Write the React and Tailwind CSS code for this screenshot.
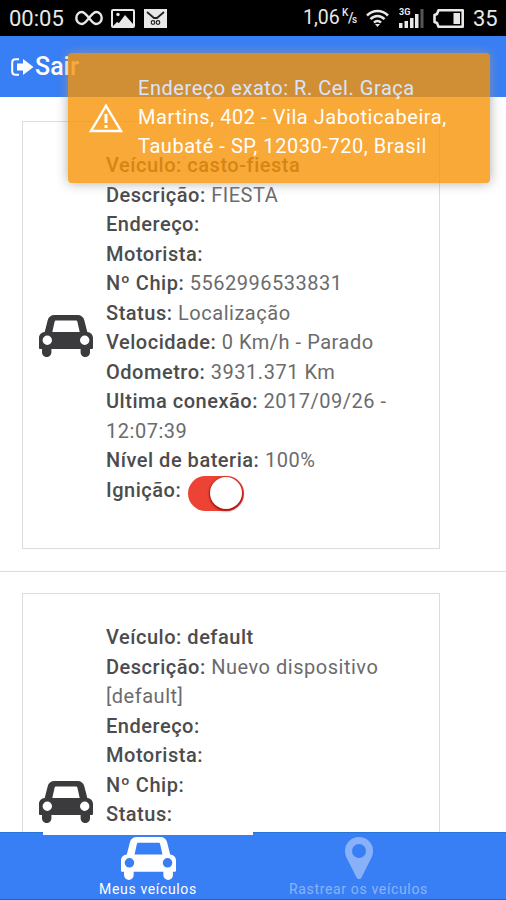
import React from "react";

const primaryCar = [
  { label: "Veículo:", value: "casto-fiesta", bold: true },
  { label: "Descrição:", value: "FIESTA" },
  { label: "Endereço:" },
  { label: "Motorista:" },
  { label: "Nº Chip:", value: "5562996533831" },
  { label: "Status:", value: "Localização" },
  { label: "Velocidade:", value: "0 Km/h - Parado" },
  { label: "Odometro:", value: "3931.371 Km" },
  { label: "Ultima conexão:", value: "2017/09/26 - 12:07:39" },
  { label: "Nível de bateria:", value: "100%" },
  { label: "Ignição:", toggle: true },
];

const secondCar = [
  { label: "Veículo:", value: "default", bold: true },
  { label: "Descrição:", value: "Nuevo dispositivo [default]" },
  { label: "Endereço:" },
  { label: "Motorista:" },
  { label: "Nº Chip:" },
  { label: "Status:" },
];

const CarIcon = ({ className }) => (
  <svg viewBox="0 0 54 42" className={className} fill="currentColor">
    <path
      fillRule="evenodd"
      d="M15.500 0h23c3.600 0 6 2 6.800 5.200L48.300 17c3.300.3 5.700 2.600 5.700 6v9.800c0 .8-.5 1.200-1.200 1.200H51v3.400a4.700 4.700 0 0 1-9.400 0V34H12.400v3.400a4.700 4.700 0 0 1-9.400 0V34H1.200C.5 34 0 33.600 0 32.800V23c0-3.400 2.400-5.700 5.700-6l3-11.800C9.500 2 11.900 0 15.500 0Zm1.700 5.600c-.9 0-1.400.4-1.600 1.200L13.300 17h27.400L38.400 6.800c-.2-.8-.7-1.200-1.600-1.200ZM8.300 20.500a4.700 4.700 0 1 0 0 9.400 4.700 4.700 0 0 0 0-9.400Zm37.400 0a4.700 4.700 0 1 0 0 9.400 4.700 4.700 0 0 0 0-9.400Z"
    />
  </svg>
);

const StatusBar = () => (
  <div className="flex h-9 shrink-0 items-center bg-black text-[#e8e8e8]">
    <span className="ml-[9px] mt-[2px] w-[56px] text-[22px] leading-9">00:05</span>
    <svg viewBox="0 0 28 16" className="ml-[10px] h-4 w-7" fill="none" stroke="currentColor" strokeWidth="2.4">
      <path d="M14 8C11 4.500 9.500 2 6.800 2a5.500 6 0 0 0 0 12C9.500 14 11 11.500 14 8s4.500-6 7.200-6a5.500 6 0 0 1 0 12C18.500 14 17 11.500 14 8Z" />
    </svg>
    <svg viewBox="0 0 24 19" className="ml-[8px] h-[19px] w-6" fill="none">
      <rect x="1" y="1" width="22" height="17" rx="1" stroke="currentColor" strokeWidth="2" />
      <path d="m2 17 4-4 2 1 6-8 8 9v2Z" fill="currentColor" />
      <circle cx="7" cy="5.500" r="1.700" fill="currentColor" />
    </svg>
    <svg viewBox="0 0 23 19" className="ml-[9px] h-[19px] w-[23px]" fill="none">
      <rect width="23" height="19" fill="currentColor" />
      <path d="m3 3 7 6h3l7-6" stroke="#222" strokeWidth="1.800" />
      <circle cx="9" cy="13.500" r="1.800" stroke="#222" strokeWidth="1.200" />
      <circle cx="14" cy="13.500" r="1.800" stroke="#222" strokeWidth="1.200" />
    </svg>
    <span className="ml-auto w-[37px] text-[19.500px] leading-9">1,06</span>
    <span className="ml-[2px] flex w-[15px] text-[10px] font-medium leading-none">
      <span className="-mt-[3px] w-[6px]">K</span>
      <span className="w-[4px] text-[14px]">/</span>
      <span className="mt-[4px]">s</span>
    </span>
    <svg viewBox="0 0 23 18" className="ml-[9px] h-[18px] w-[23px]" fill="none" stroke="currentColor" strokeWidth="2.500">
      <path d="M1 6.500c6-6 15-6 21 0M4.500 10.200c4-4.200 10-4.200 14 0M8 13.600c2-2 5-2 7 0" />
      <path d="m9 15 2.500 3 2.500-3Z" fill="currentColor" stroke="none" />
    </svg>
    <div className="ml-[10px] flex h-[19px] w-[25px] flex-col">
      <span className="h-[8px] text-[9px] font-bold leading-[7px]">3G</span>
      <svg viewBox="0 0 25 19" className="-mt-[8px] h-[19px] w-[25px] shrink-0" fill="currentColor">
        <rect y="14" width="3.500" height="5" />
        <rect x="5.500" y="12" width="3.500" height="7" />
        <rect x="11" y="9" width="3.500" height="10" />
        <rect x="16" y="5" width="3.500" height="14" />
        <rect x="21.500" width="3" height="19" fill="#555" />
      </svg>
    </div>
    <svg viewBox="0 0 31 19" className="ml-[9px] h-[19px] w-[31px]" fill="none">
      <path d="M5.500 1.300h24.200v16.400H5.500L4 14 1.500 13V6L4 5Z" stroke="currentColor" strokeWidth="2.600" strokeLinejoin="round" />
      <rect x="20.500" y="4" width="6.500" height="11" fill="currentColor" />
    </svg>
    <span className="ml-[9px] mr-[8px] mt-[2px] w-[25px] text-[22px] leading-9">35</span>
  </div>
);

const Toggle = () => (
  <span className="flex h-[35px] w-[56px] items-center justify-end rounded-full bg-[#ed4335] pr-[2px]">
    <span className="h-[32px] w-[32px] rounded-full bg-white shadow-[0_1px_2px_1px_#a91515]" />
  </span>
);

const VehicleCard = ({ rows, className }) => (
  <div className={`ml-[22px] flex w-[418px] items-center border border-[#dcdcdc] ${className}`}>
    <CarIcon className="ml-[15.5px] mt-px h-[42px] w-[54px] shrink-0 text-[#3b3b3d]" />
    <div className="ml-[13.5px] w-[300px] self-start pt-[29px] text-[20px] leading-[29.5px] tracking-[0.52px] text-[#6b6b6d]">
      {rows.map((row) => (
        <div key={row.label} className={row.toggle ? "flex h-[38px] items-start gap-[7px]" : ""}>
          <span className="font-medium text-[#4c4c4e]">
            {row.label}
            {row.bold && ` ${row.value}`}
          </span>
          {row.value && !row.bold && ` ${row.value}`}
          {row.toggle && <Toggle />}
        </div>
      ))}
    </div>
  </div>
);

const Toast = () => (
  <div className="absolute left-[68px] top-[53px] flex h-[130px] w-[422px] items-center rounded-[4px] bg-[#f89406] opacity-80 shadow-[0_0_12px_#999]">
    <svg viewBox="0 0 34 30" className="ml-[21px] h-[30px] w-[34px]" fill="none" stroke="#fff">
      <path d="M17 2.800 32 28H2Z" strokeWidth="2.400" />
      <path d="M17 11v9M17 22v3" strokeWidth="3" />
    </svg>
    <p className="ml-[15px] mt-[-1px] whitespace-nowrap text-[20px] leading-[29.3px] tracking-[0.55px] text-white">
      Endereço exato: R. Cel. Graça
      <br />
      Martins, 402 - Vila Jaboticabeira,
      <br />
      Taubaté - SP, 12030-720, Brasil
    </p>
  </div>
);

const TabBar = () => (
  <div className="flex h-[68px] shrink-0 bg-[#387ef5] text-[14px] leading-4 text-white shadow-[inset_0_1px_0_#2375d7,inset_0_-1px_0_#1e61d4]">
    <div className="ml-[43px] flex w-[210px] flex-col items-center border-t-[3px] border-white">
      <CarIcon className="mt-[2px] h-[43px] w-[55px] shrink-0" />
      <span className="mt-px tracking-[0.65px]">Meus veículos</span>
    </div>
    <div className="flex w-[211px] flex-col items-center opacity-40">
      <svg viewBox="0 0 28 42" className="mt-[5px] h-[42px] w-7 shrink-0" fill="currentColor">
        <path fillRule="evenodd" d="M14 0a14 14 0 0 1 14 14c0 4-1.300 6.200-3 9.500l-8.500 17c-1 2-4 2-5 0L3 23.500C1.300 20.200 0 18 0 14A14 14 0 0 1 14 0Zm0 7a7 7 0 1 0 0 14 7 7 0 0 0 0-14Z" />
      </svg>
      <span className="mt-[2px] tracking-[0.65px]">Rastrear os veículos</span>
    </div>
  </div>
);

const App = () => {
  return (
    <div className="relative flex h-[900px] w-[506px] flex-col overflow-hidden bg-white font-['Roboto',sans-serif]">
      <StatusBar />
      <header className="flex h-[61px] shrink-0 items-center bg-[#387ef5] text-white">
        <svg viewBox="0 0 23 18" className="ml-[11px] h-[18px] w-[23px]" fill="none">
          <path d="M8 1.200H4.500Q1.200 1.200 1.200 4.500v9q0 3.300 3.300 3.300H8" stroke="currentColor" strokeWidth="2" />
          <path d="M6 5.500h6V1l10.500 8L12 17v-4.500H6Z" fill="currentColor" />
        </svg>
        <span className="ml-[1px] text-[25px] font-medium">Sair</span>
      </header>
      <main className="min-h-0 flex-1 overflow-hidden">
        <VehicleCard rows={primaryCar} className="mt-6 h-[428px]" />
        <div className="mb-[21px] mt-[22px] h-px bg-[#dcdcdc]" />
        <VehicleCard rows={secondCar} className="h-[416px]" />
      </main>
      <TabBar />
      <Toast />
    </div>
  );
};

export default App;
